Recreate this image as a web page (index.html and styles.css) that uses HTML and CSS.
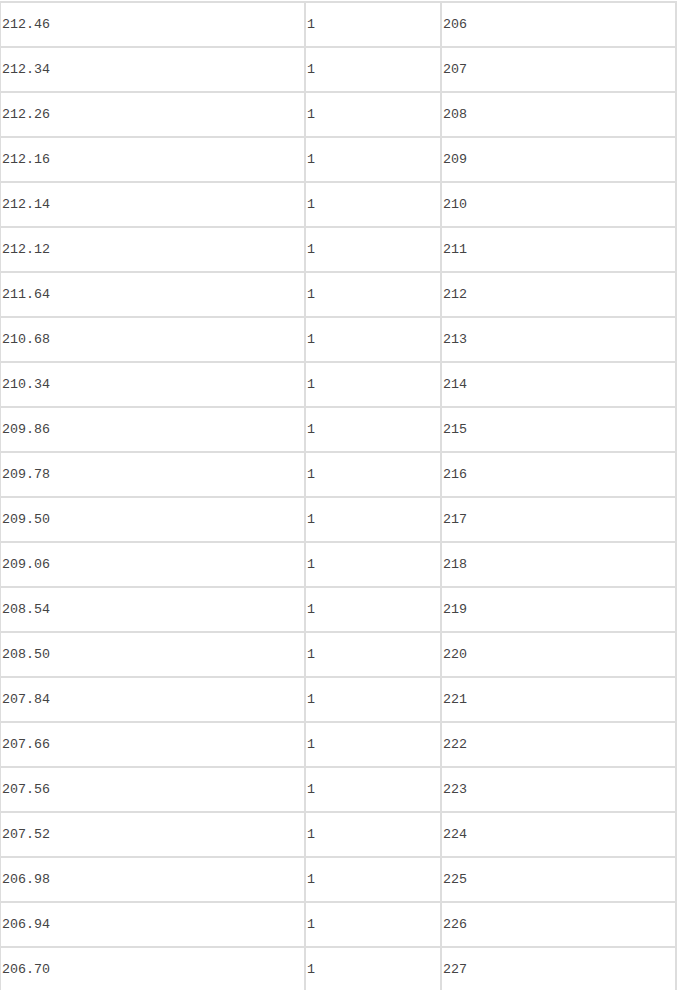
FILE: index.html
```html
<!DOCTYPE html>
<html>
<head>
<meta charset="utf-8">
<link rel="stylesheet" href="styles.css">
</head>
<body>
<table class="data">
<colgroup><col class="c1"><col class="c2"><col class="c3"></colgroup>
<tbody>
<tr><td>212.46</td><td>1</td><td>206</td></tr>
<tr><td>212.34</td><td>1</td><td>207</td></tr>
<tr><td>212.26</td><td>1</td><td>208</td></tr>
<tr><td>212.16</td><td>1</td><td>209</td></tr>
<tr><td>212.14</td><td>1</td><td>210</td></tr>
<tr><td>212.12</td><td>1</td><td>211</td></tr>
<tr><td>211.64</td><td>1</td><td>212</td></tr>
<tr><td>210.68</td><td>1</td><td>213</td></tr>
<tr><td>210.34</td><td>1</td><td>214</td></tr>
<tr><td>209.86</td><td>1</td><td>215</td></tr>
<tr><td>209.78</td><td>1</td><td>216</td></tr>
<tr><td>209.50</td><td>1</td><td>217</td></tr>
<tr><td>209.06</td><td>1</td><td>218</td></tr>
<tr><td>208.54</td><td>1</td><td>219</td></tr>
<tr><td>208.50</td><td>1</td><td>220</td></tr>
<tr><td>207.84</td><td>1</td><td>221</td></tr>
<tr><td>207.66</td><td>1</td><td>222</td></tr>
<tr><td>207.56</td><td>1</td><td>223</td></tr>
<tr><td>207.52</td><td>1</td><td>224</td></tr>
<tr><td>206.98</td><td>1</td><td>225</td></tr>
<tr><td>206.94</td><td>1</td><td>226</td></tr>
<tr><td>206.70</td><td>1</td><td>227</td></tr>
</tbody>
</table>
</body>
</html>
```
FILE: styles.css
```css
html, body {
  margin: 0;
  padding: 0;
  background: #fff;
  overflow: hidden;
}
.data {
  margin: 1px 0 0 -1px;
  border-collapse: separate;
  border-spacing: 0;
  border-top: 2px solid #dddddd;
  border-left: 2px solid #dddddd;
  table-layout: fixed;
  width: 678px;
  font-family: "Liberation Mono", "DejaVu Sans Mono", monospace;
  font-size: 13.33px;
  color: #444;
}
.c1 { width: 305px; }
.c2 { width: 136px; }
.c3 { width: 235px; }
.data td {
  height: 43px;
  padding: 0 0 0 1px;
  border-right: 2px solid #dddddd;
  border-bottom: 2px solid #dddddd;
  vertical-align: middle;
  box-sizing: content-box;
  white-space: nowrap;
}
```
